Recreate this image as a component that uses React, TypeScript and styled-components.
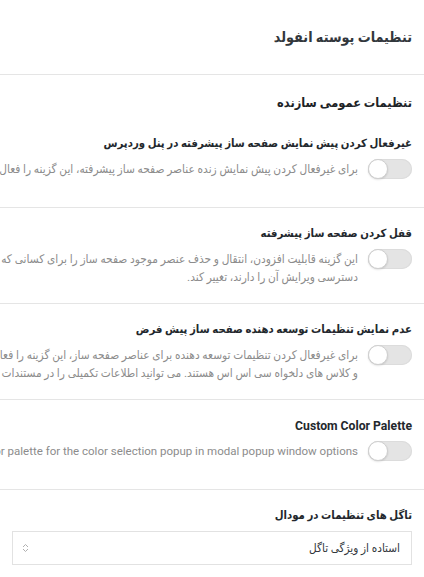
import React from 'react'
import styled, { createGlobalStyle } from 'styled-components'

const GlobalStyle = createGlobalStyle`
    html, body {
        margin: 0;
        padding: 0;
        background: #ffffff;
        overflow: hidden;
    }
    body {
        font-family: Roboto, "DejaVu Sans Condensed", "DejaVu Sans", sans-serif;
        font-stretch: condensed;
    }
`

const Page = styled.div`
    direction: rtl;
    width: 424px;
    height: 577px;
    overflow: hidden;
    background: #fff;
    color: #23282d;
`

const Header = styled.header`
    height: 75px;
    box-sizing: border-box;
    padding: 0 12px;
    display: flex;
    align-items: center;
    border-bottom: 1px solid #e5e5e5;
`

const PageTitle = styled.h1`
    margin: 0;
    font-size: 14.3px;
    font-weight: bold;
    color: #32373c;
`

const Section = styled.section`
    padding: 18px 0 0;
`

const SectionTitle = styled.h2`
    margin: 0 12px 5px;
    font-size: 12.7px;
    line-height: 20px;
    font-weight: bold;
    color: #1d2327;
`

const Row = styled.div<{ $last?: boolean }>`
    padding: 16px 12px 17px;
    border-bottom: ${(p) => (p.$last ? 'none' : '1px solid #e5e5e5')};
`

const RowTitle = styled.div<{ $latin?: boolean }>`
    font-size: ${(p) => (p.$latin ? '12.2px' : '11.3px')};
    font-stretch: ${(p) => (p.$latin ? 'normal' : 'condensed')};
    line-height: 20px;
    font-weight: bold;
    color: #23282d;
    margin-bottom: 5px;
    white-space: nowrap;
`

const Control = styled.div`
    display: flex;
    align-items: flex-start;
    gap: 10px;
    min-height: 31px;
`

const Switch = styled.span`
    position: relative;
    flex: 0 0 auto;
    width: 44px;
    height: 20px;
    border-radius: 10px;
    background: #e4e4e4;
    box-shadow: inset 0 0 0 1px #dcdcdc;
`

const Knob = styled.span`
    position: absolute;
    top: 0;
    left: 0;
    width: 20px;
    height: 20px;
    box-sizing: border-box;
    border-radius: 50%;
    background: #fff;
    border: 1px solid #cfcfcf;
    box-shadow: 0 1px 2px rgba(0, 0, 0, 0.12);
`

const Desc = styled.p<{ $latin?: boolean }>`
    margin: 0;
    padding-top: 1px;
    font-size: ${(p) => (p.$latin ? '11.5px' : '11.8px')};
    font-stretch: ${(p) => (p.$latin ? 'normal' : 'condensed')};
    line-height: 18px;
    color: #8c8c8c;
    white-space: nowrap;
`

const Select = styled.div`
    height: 34px;
    box-sizing: border-box;
    border: 1px solid #e2e2e2;
    display: flex;
    align-items: center;
    justify-content: space-between;
    padding: 0 11px 0 9px;
    font-size: 11.7px;
    color: #32373c;
`

const Toggle = () => (
    <Switch>
        <Knob />
    </Switch>
)

const Arrows = () => (
    <svg width="7" height="10" viewBox="0 0 7 10">
        <path d="M1 4 L3.5 1.5 L6 4" fill="none" stroke="#b0b0b0" strokeWidth="1" />
        <path d="M1 6 L3.5 8.5 L6 6" fill="none" stroke="#b0b0b0" strokeWidth="1" />
    </svg>
)

type Setting = { title: string; lines: string[]; latin?: boolean }

const settings: Setting[] = [
    {
        title: 'غیرفعال کردن پیش نمایش صفحه ساز پیشرفته در پنل وردپرس',
        lines: ['برای غیرفعال کردن پیش نمایش زنده عناصر صفحه ساز پیشرفته، این گزینه را فعال کنید.'],
    },
    {
        title: 'قفل کردن صفحه ساز پیشرفته',
        lines: [
            'این گزینه قابلیت افزودن، انتقال و حذف عنصر موجود صفحه ساز را برای کسانی که فقط',
            'دسترسی ویرایش آن را دارند، تغییر کند.',
        ],
    },
    {
        title: 'عدم نمایش تنظیمات توسعه دهنده صفحه ساز پیش فرض',
        lines: [
            'برای غیرفعال کردن تنظیمات توسعه دهنده برای عناصر صفحه ساز، این گزینه را فعال کنید. این تنظیمات شامل شناسه',
            'و کلاس های دلخواه سی اس اس هستند. می توانید اطلاعات تکمیلی را در مستندات مطالعه کنید.',
        ],
    },
    {
        title: 'Custom Color Palette',
        latin: true,
        lines: ['Enable custom color palette for the color selection popup in modal popup window options'],
    },
]

export default function App() {
    return (
        <Page>
            <GlobalStyle />
            <Header>
                <PageTitle>تنظیمات پوسته انفولد</PageTitle>
            </Header>
            <Section>
                <SectionTitle>تنظیمات عمومی سازنده</SectionTitle>
                {settings.map((s) => (
                    <Row key={s.title}>
                        <RowTitle $latin={s.latin}>{s.title}</RowTitle>
                        <Control>
                            <Toggle />
                            <Desc $latin={s.latin}>
                                {s.lines.map((l, i) => (
                                    <React.Fragment key={i}>
                                        {i > 0 && <br />}
                                        {l}
                                    </React.Fragment>
                                ))}
                            </Desc>
                        </Control>
                    </Row>
                ))}
                <Row $last>
                    <RowTitle>تاگل های تنظیمات در مودال</RowTitle>
                    <Select>
                        <span>استاده از ویژگی تاگل</span>
                        <Arrows />
                    </Select>
                </Row>
            </Section>
        </Page>
    )
}
